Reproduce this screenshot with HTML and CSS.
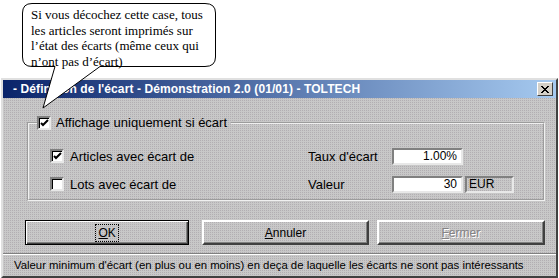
FILE: index.html
```html
<!DOCTYPE html>
<html lang="fr">
<head>
    <meta charset="UTF-8">
    <title>Définition de l'écart</title>
    <link rel="stylesheet" href="styles.css">
</head>
<body>
    <div class="callout">
        <svg class="bubble" width="230" height="112" viewBox="0 0 230 112">
            <path d="M32 3.5 H205 Q215.5 3.5 215.5 13 V57 Q215.5 66.5 205 66.5 H100 L43 108 L55 66.5 H32 Q22.5 66.5 22.5 57 V13 Q22.5 3.5 32 3.5 Z" fill="#fff" stroke="#000" stroke-width="1"/>
        </svg>
        <p class="callout-text">Si vous décochez cette case, tous les articles seront imprimés sur l’état des écarts (même ceux qui n’ont pas d’écart)</p>
    </div>

    <div class="window">
        <div class="titlebar">
            <span class="title">- Définition de l'écart - Démonstration 2.0 (01/01) - TOLTECH</span>
            <span class="close">
                <svg width="8" height="7" viewBox="0 0 8 7"><path d="M0 0 L7 7 M1 0 L8 7 M7 0 L0 7 M8 0 L1 7" stroke="#000" stroke-width="1"/></svg>
            </span>
        </div>

        <div class="content">
            <fieldset class="group">
                <legend class="check-label">
                    <span class="box checked"><svg width="9" height="9" viewBox="0 0 9 9"><path d="M1 4 L3 6 L8 1" fill="none" stroke="#000" stroke-width="2"/></svg></span>
                    Affichage uniquement si écart
                </legend>

                <div class="row">
                    <label class="check-label left">
                        <span class="box checked"><svg width="9" height="9" viewBox="0 0 9 9"><path d="M1 4 L3 6 L8 1" fill="none" stroke="#000" stroke-width="2"/></svg></span>
                        Articles avec écart de
                    </label>
                    <span class="field-label">Taux d'écart</span>
                    <span class="input">1.00%</span>
                </div>
                <div class="row">
                    <label class="check-label left">
                        <span class="box"></span>
                        Lots avec écart de
                    </label>
                    <span class="field-label">Valeur</span>
                    <span class="input">30</span>
                    <span class="unit">EUR</span>
                </div>
            </fieldset>

            <div class="buttons">
                <button class="btn default"><span class="focus"><u>O</u>K</span></button>
                <button class="btn"><u>A</u>nnuler</button>
                <button class="btn disabled"><u>F</u>ermer</button>
            </div>
        </div>

        <div class="status">Valeur minimum d'écart (en plus ou en moins) en deça de laquelle les écarts ne sont pas intéressants</div>
    </div>
</body>
</html>
```

FILE: styles.css
```css
body {
    margin: 0;
    background: #fff;
    font-family: "Liberation Sans", Arial, sans-serif;
    width: 559px;
    height: 278px;
    overflow: hidden;
}
.callout {
    position: absolute;
    left: 0;
    top: 0;
    z-index: 2;
}
.bubble {
    position: absolute;
    left: 0;
    top: 0;
}
.callout-text {
    position: absolute;
    left: 31px;
    top: 7px;
    width: 184px;
    margin: 0;
    font-family: "Liberation Serif", "Times New Roman", serif;
    font-size: 13px;
    line-height: 15.5px;
    color: #000;
}
.window {
    margin: 78px 0 0 1px;
    width: 553px;
    height: 196px;
    border: 2px solid;
    border-color: #e0e0e0 #404040 #404040 #e0e0e0;
    background-color: #c8c8c8;
    background-image: conic-gradient(from 0deg at 1px 1px, #b2aeb2 25%, transparent 0);
    background-size: 2px 2px;
    display: flex;
    flex-direction: column;
}
.titlebar {
    height: 18px;
    background: linear-gradient(to right, #0a246a, #a6caf0);
    display: flex;
    align-items: center;
    justify-content: space-between;
    padding: 0 3px 0 10px;
    color: #fff;
    font-weight: bold;
    font-size: 12px;
    letter-spacing: 0.1px;
}
.close {
    width: 14px;
    height: 12px;
    background: #d4d0c8;
    border: 1px solid;
    border-color: #fff #404040 #404040 #fff;
    display: flex;
    align-items: center;
    justify-content: center;
}
.content {
    flex: 1;
    padding: 17px 11px 0 24px;
}
.group {
    margin: 0;
    padding: 12px 0 0 0;
    height: 70px;
    border: 2px groove #f0f0f0;
}
.check-label {
    display: flex;
    align-items: center;
    gap: 6px;
    font-size: 13px;
    color: #000;
}
legend.check-label {
    padding: 0 4px 0 0;
    margin-left: 8px;
    gap: 5px;
}
.box {
    width: 9px;
    height: 9px;
    background: #fff;
    border: 2px solid;
    border-color: #808080 #e8e8e8 #e8e8e8 #808080;
    box-shadow: inset 1px 1px 0 #000;
    display: flex;
    align-items: center;
    justify-content: center;
    padding: 1px 0 0 1px;
}
.row {
    height: 28px;
    display: flex;
    align-items: center;
    padding-left: 21px;
}
.left {
    width: 258px;
}
.field-label {
    width: 84px;
    font-size: 13px;
}
.input {
    width: 60px;
    height: 13px;
    background: #fff;
    border: 2px solid;
    border-color: #808080 #e8e8e8 #e8e8e8 #808080;
    padding: 0 4px 0 3px;
    text-align: right;
    font-size: 12px;
    line-height: 13px;
}
.unit {
    margin-left: 2px;
    width: 43px;
    height: 13px;
    border: 2px solid;
    border-color: #808080 #e8e8e8 #e8e8e8 #808080;
    padding-left: 2px;
    font-size: 12px;
    line-height: 13px;
}
.buttons {
    display: flex;
    margin: 19px 0 0 -2px;
    gap: 13px;
}
.btn {
    height: 25px;
    padding: 0;
    font-family: "Liberation Sans", Arial, sans-serif;
    font-size: 12px;
    color: #000;
    background: transparent;
    border: 2px solid;
    border-color: #fff #404040 #404040 #fff;
    box-shadow: inset -1px -1px 0 #808080;
}
.btn:nth-child(1) { width: 166px; }
.btn:nth-child(2) { width: 168px; }
.btn:nth-child(3) { width: 170px; margin-left: -5px; }
.btn.default {
    border: 1px solid #000;
    box-shadow: inset 1px 1px 0 #fff, inset -1px -1px 0 #404040, inset -2px -2px 0 #808080;
}
.focus {
    outline: 1px dotted #000;
    padding: 1px 2px;
}
.btn.disabled {
    color: #848284;
    text-shadow: 1px 1px 0 #fff;
}
.status {
    height: 22px;
    border-top: 1px solid #808080;
    box-shadow: inset 0 1px 0 #fff;
    padding-left: 11px;
    display: flex;
    align-items: center;
    font-size: 11.35px;
    color: #000;
}
```
